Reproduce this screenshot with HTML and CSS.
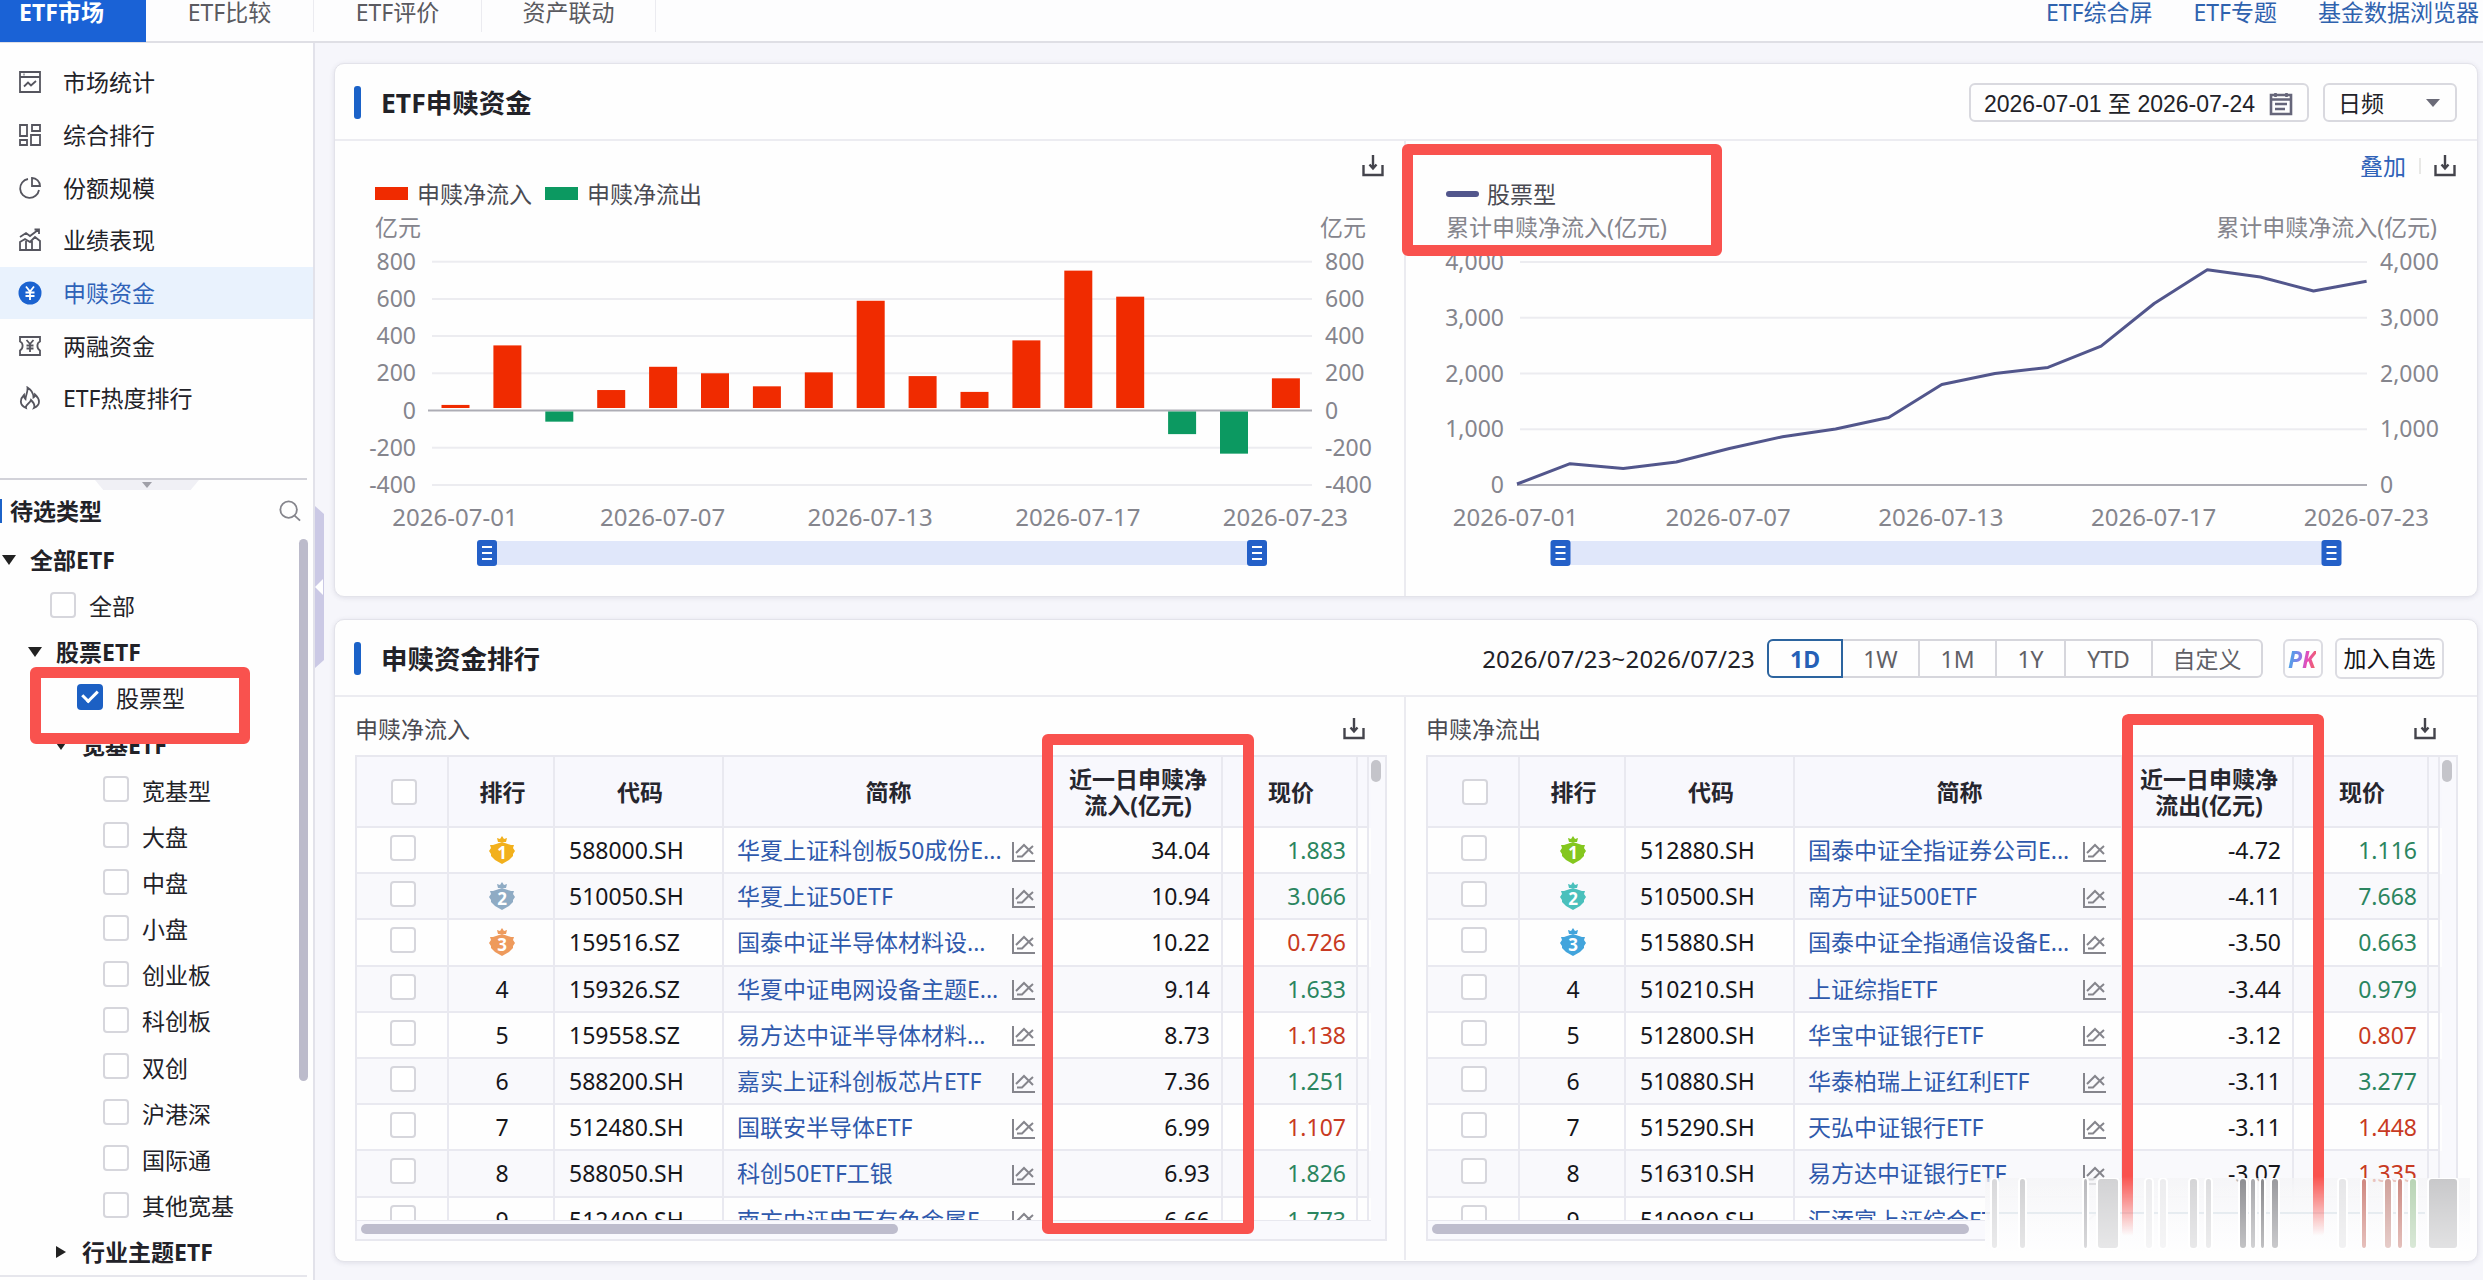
FILE: index.html
```html
<!DOCTYPE html>
<html lang="zh-CN">
<head>
    <meta charset="UTF-8">
    <meta name="viewport" content="width=device-width, initial-scale=1.0">
    <title>ETF申赎资金</title>
    <link rel="stylesheet" href="styles.css">
</head>
<body>
    <svg class="sprite">
        <symbol id="i-stat" viewBox="0 0 24 24"><path d="M2 2h20v20H2zM2 7h20M5.500 4.500h1M6 16.500l4-4 3 3 5-4.500"/></symbol>
        <symbol id="i-grid" viewBox="0 0 24 24"><path d="M2 2h7v11H2zM14 2h8v6h-8zM2 17h7v5H2zM13 12h9v10h-9z"/></symbol>
        <symbol id="i-pie" viewBox="0 0 24 24"><path d="M10 3a9.500 9.500 0 1 0 11 11M14 2v8h8a8 8 0 0 0-8-8z"/></symbol>
        <symbol id="i-perf" viewBox="0 0 24 24"><path d="M2 22V14l5-3 5 3 5-5 5 4v9zM8 22v-9M14 22v-9M2 9l6-4 4 3 8-6M16.500 1.500H21V6"/></symbol>
        <symbol id="i-yuan" viewBox="0 0 24 24"><circle cx="12" cy="12" r="11.500" fill="#1b63d0" stroke="none"/><path stroke="#fff" d="M8 5.500l4 5 4-5M12 10.500V19M7.500 11.500h9M7.500 15h9"/></symbol>
        <symbol id="i-ticket" viewBox="0 0 24 24"><path d="M2 3h20v4.500c-3.500 1.500-3.500 7 0 9V21H2v-4.500c3.500-2 3.500-7.500 0-9zM8.500 6l3.500 4 3.500-4M12 10v8M8.500 11.500h7M8.500 14.500h7"/></symbol>
        <symbol id="i-fire" viewBox="0 0 24 24"><path d="M8 22C1 19 2 13 6 9c0 2 .5 3 1.500 4C8 8 10 6 9.500 1.500c4 2.500 6 6 6 10 1-.5 1.500-1.500 1.500-3C22 13 23 19 16 22c1.500-3 0-5-3-8-1 4-6 4-5 8z"/></symbol>
        <symbol id="i-down" viewBox="0 0 22 22"><path d="M1.500 10v10h19V10M11 0v13M7.500 9.500l3.500 4 3.500-4"/></symbol>
        <symbol id="i-cal" viewBox="0 0 24 24"><path d="M2 3h20v19H2zM2 7.500h20M6.500 1v4M17.500 1v4M6 12h12M6 17h10"/></symbol>
        <symbol id="i-line" viewBox="0 0 24 22"><path d="M2 1v19h22M5 12l8-8 9 9M6 15.500h5l6-6 5-4.500"/></symbol>
        <symbol id="i-search" viewBox="0 0 24 24"><circle cx="10.500" cy="10.500" r="9"/><path d="M17 17l6 5.500"/></symbol>
    </svg>

    <header class="topbar">
        <nav class="tabs">
            <a class="tab active">ETF市场</a>
            <a class="tab">ETF比较</a>
            <a class="tab">ETF评价</a>
            <a class="tab">资产联动</a>
        </nav>
        <nav class="links">
            <a>ETF综合屏</a>
            <a>ETF专题</a>
            <a>基金数据浏览器</a>
        </nav>
    </header>

    <div class="layout">
        <aside class="sidebar">
            <ul class="menu">
                <li><svg><use href="#i-stat"/></svg>市场统计</li>
                <li><svg><use href="#i-grid"/></svg>综合排行</li>
                <li><svg><use href="#i-pie"/></svg>份额规模</li>
                <li><svg><use href="#i-perf"/></svg>业绩表现</li>
                <li class="active"><svg><use href="#i-yuan"/></svg>申赎资金</li>
                <li><svg><use href="#i-ticket"/></svg>两融资金</li>
                <li><svg><use href="#i-fire"/></svg>ETF热度排行</li>
            </ul>
            <div class="types">
                <span class="fold"></span>
                <div class="types-head">
                    <b>待选类型</b>
                    <svg><use href="#i-search"/></svg>
                </div>
                <ul class="tree">
                    <li class="group l0"><i class="caret"></i>全部ETF</li>
                    <li class="leaf l1"><i class="check"></i>全部</li>
                    <li class="group l1"><i class="caret"></i>股票ETF</li>
                    <li class="leaf l2"><i class="check on"></i>股票型</li>
                    <li class="group l2"><i class="caret"></i>宽基ETF</li>
                    <li class="leaf l3"><i class="check"></i>宽基型</li>
                    <li class="leaf l3"><i class="check"></i>大盘</li>
                    <li class="leaf l3"><i class="check"></i>中盘</li>
                    <li class="leaf l3"><i class="check"></i>小盘</li>
                    <li class="leaf l3"><i class="check"></i>创业板</li>
                    <li class="leaf l3"><i class="check"></i>科创板</li>
                    <li class="leaf l3"><i class="check"></i>双创</li>
                    <li class="leaf l3"><i class="check"></i>沪港深</li>
                    <li class="leaf l3"><i class="check"></i>国际通</li>
                    <li class="leaf l3"><i class="check"></i>其他宽基</li>
                    <li class="group l2 closed"><i class="caret"></i>行业主题ETF</li>
                </ul>
                <span class="tree-scroll"></span>
            </div>
            <span class="splitter"></span>
        </aside>

        <main class="content">
            <section class="panel panel-chart">
                <div class="panel-head">
                    <h2>ETF申赎资金</h2>
                    <div class="tools">
                        <span class="date-range">2026-07-01 至 2026-07-24<svg><use href="#i-cal"/></svg></span>
                        <span class="select">日频<i class="caret"></i></span>
                    </div>
                </div>
                <div class="halves">
                    <div class="half">
                        <div class="chart-tools"><svg><use href="#i-down"/></svg></div>
                        <svg class="chart" id="barChart" width="1070" height="416" viewBox="335 181 1070 416"></svg>
                    </div>
                    <div class="half">
                        <div class="chart-tools"><a>叠加</a><i></i><svg><use href="#i-down"/></svg></div>
                        <svg class="chart" id="lineChart" width="1070" height="416" viewBox="1406 181 1070 416"></svg>
                    </div>
                </div>
            </section>

            <section class="panel panel-rank">
                <div class="panel-head">
                    <h2>申赎资金排行</h2>
                    <div class="tools">
                        <span class="period">2026/07/23~2026/07/23</span>
                        <div class="range">
                            <span class="on">1D</span><span>1W</span><span>1M</span><span>1Y</span><span>YTD</span><span>自定义</span>
                        </div>
                        <span class="pk"><em>PK</em></span>
                        <span class="add">加入自选</span>
                    </div>
                </div>
                <div class="halves">
                    <div class="half">
                        <div class="rank-title">申赎净流入<svg><use href="#i-down"/></svg></div>
                        <div class="table" id="inTable"></div>
                    </div>
                    <div class="half">
                        <div class="rank-title">申赎净流出<svg><use href="#i-down"/></svg></div>
                        <div class="table" id="outTable"></div>
                    </div>
                </div>
            </section>
        </main>
    </div>

    <div class="smear" id="smear"></div>
    <div class="mark mark-type"></div>
    <div class="mark mark-legend"></div>
    <div class="mark mark-in"></div>
    <div class="mark mark-out"></div>

    <script src="script.js"></script>
</body>
</html>
```
FILE: styles.css
```css
* {
    box-sizing: border-box;
}
body {
    margin: 0;
    width: 2483px;
    height: 1280px;
    overflow: hidden;
    position: relative;
    background: #f6f6fb;
    font-family: "Noto Sans", "Noto Sans CJK SC", sans-serif;
    font-size: 23px;
    line-height: 30px;
    color: #222228;
}
ul {
    margin: 0;
    padding: 0;
    list-style: none;
}
svg {
    fill: none;
    stroke: #55555e;
    stroke-width: 1.8;
    flex: none;
}
.sprite {
    display: none;
}

/* top bar */
.topbar {
    display: flex;
    justify-content: space-between;
    height: 43px;
    background: #fdfdfe;
    border-bottom: 2px solid #dfdfe5;
}
.tabs, .links {
    display: flex;
}
.tab {
    width: 168px;
    height: 32px;
    line-height: 25px;
    text-align: center;
    color: #5a5a60;
    border-right: 1px solid #ebebf0;
}
.tab:last-child {
    width: 174px;
}
.tab.active {
    width: 146px;
    height: 42px;
    padding-right: 23px;
    background: #1a62d6;
    color: #fff;
    font-weight: bold;
    border: none;
}
.links {
    gap: 41px;
    padding-right: 4px;
    line-height: 25px;
    color: #2f62ae;
}

/* sidebar */
.layout {
    display: flex;
    height: 1237px;
}
.sidebar {
    position: relative;
    width: 316px;
    background: #fefefe;
    border-right: 2px solid #e2e2ea;
}
.menu {
    height: 435px;
    padding-top: 13px;
}
.menu li {
    display: flex;
    align-items: center;
    gap: 21px;
    height: 52.700px;
    padding-left: 18px;
}
.menu svg {
    width: 24px;
    height: 24px;
}
.menu .active {
    background: #e9f2fd;
    color: #2f62b8;
}
.types {
    position: relative;
    width: 307px;
    border-top: 2px solid #d2d2d9;
}
.fold {
    position: absolute;
    left: 95px;
    top: 0;
    width: 104px;
    height: 10px;
    background: #f0f0f5;
    clip-path: polygon(0 0, 100% 0, 92% 100%, 8% 100%);
}
.fold::after {
    content: "";
    position: absolute;
    left: 47px;
    top: 2px;
    border: 5px solid transparent;
    border-top: 6px solid #a0a0a8;
}
.types-head {
    display: flex;
    justify-content: space-between;
    align-items: center;
    height: 57px;
    padding: 4px 6px 0 0;
}
.types-head b {
    height: 24px;
    line-height: 24px;
    padding-left: 8px;
    border-left: 2px solid #1b62c8;
}
.types-head svg {
    width: 22px;
    height: 22px;
    stroke: #85858c;
    stroke-width: 2;
}
.tree {
    border-bottom: 2px solid #e6e6ec;
}
.tree li {
    display: flex;
    align-items: center;
    height: 46.150px;
}
.group {
    font-weight: bold;
}
.tree .caret {
    width: 14px;
    margin-right: 14px;
    border: 7px solid transparent;
    border-top: 10px solid #222;
    border-bottom: 0;
}
.tree .closed .caret {
    width: 9px;
    margin-left: 2px;
    margin-right: 16px;
    border: 6.500px solid transparent;
    border-left: 10px solid #222;
    border-right: 0;
}
.check {
    width: 26px;
    height: 26px;
    flex: none;
    background: #fff;
    border: 2px solid #d6d6dc;
    border-radius: 4px;
}
.tree .check {
    margin: -3px 13px 0 0;
}
.check.on {
    background: #1c60c4;
    border-color: #1c60c4;
}
.check.on::after {
    content: "";
    display: block;
    width: 7px;
    height: 12px;
    margin: 1px auto 0;
    border: solid #fff;
    border-width: 0 3px 3px 0;
    transform: rotate(45deg);
}
.group.l0 { padding-left: 2px; }
.group.l1 { padding-left: 28px; }
.group.l2 { padding-left: 54px; }
.leaf.l1 { padding-left: 50px; }
.leaf.l2 { padding-left: 77px; }
.leaf.l3 { padding-left: 103px; }
.tree-scroll {
    position: absolute;
    right: -1px;
    top: 59px;
    width: 9px;
    height: 542px;
    border-radius: 5px;
    background: #bcbbcb;
}
.splitter {
    position: absolute;
    left: 315px;
    top: 463px;
    width: 9px;
    height: 162px;
    background: #cbc9e5;
    clip-path: polygon(0 0, 100% 5%, 100% 95%, 0 100%);
}
.splitter::after {
    content: "";
    position: absolute;
    left: 0;
    top: 73px;
    border: 8px solid transparent;
    border-right: 8px solid #fff;
    border-left: 0;
}

/* panels */
.content {
    flex: 1;
    padding: 20px 5px 0 19px;
}
.panel {
    background: #fefefe;
    border: 1px solid #e3e3ea;
    border-radius: 10px;
    box-shadow: 0 1px 5px rgba(60, 60, 90, 0.12);
}
.panel-chart {
    height: 534px;
    margin-bottom: 22px;
}
.panel-rank {
    height: 643px;
}
.panel-head {
    display: flex;
    justify-content: space-between;
    align-items: center;
    height: 77px;
    padding: 2px 20px 0 19px;
    border-bottom: 2px solid #ececf1;
}
h2 {
    display: flex;
    align-items: center;
    gap: 20px;
    margin: 0;
    font-size: 26.500px;
}
h2::before {
    content: "";
    width: 7px;
    height: 33px;
    border-radius: 3px;
    background: #1b62c8;
}
.tools {
    display: flex;
    align-items: center;
}
.date-range, .select {
    display: flex;
    align-items: center;
    height: 39px;
    border: 2px solid #d9d9df;
    border-radius: 6px;
}
.date-range {
    width: 340px;
    margin-right: 14px;
    padding: 2px 0 0 13px;
    font-family: "Liberation Sans", "Noto Sans CJK SC", sans-serif;
}
.date-range svg {
    width: 24px;
    height: 24px;
    margin-left: 14px;
    stroke: #66667a;
    stroke-width: 2.600;
}
.select {
    width: 134px;
    justify-content: space-between;
    padding: 0 15px 0 13px;
}
.select .caret {
    border: 7px solid transparent;
    border-top: 8px solid #6b6b78;
    border-bottom: 0;
}
.halves {
    display: flex;
}
.half {
    width: 50%;
}
.half:first-child {
    border-right: 2px solid #ebebf0;
}
.panel-chart .half {
    height: 455px;
}
.panel-rank .half {
    height: 563px;
}

/* charts */
.chart-tools {
    display: flex;
    justify-content: flex-end;
    align-items: center;
    height: 40px;
    padding: 10px 21px 0 0;
    color: #2f62b8;
}
.half:first-child .chart-tools {
    padding-right: 20px;
}
.chart-tools i {
    width: 2px;
    height: 16px;
    margin: 0 13px;
    background: #e8e8e6;
}
.chart-tools svg, .rank-title svg {
    width: 22px;
    height: 22px;
    stroke: #44444c;
    stroke-width: 2.400;
}
.chart {
    display: block;
}
.chart text {
    fill: #85858d;
    stroke: none;
    font-size: 23px;
}
.chart .day {
    font-size: 24px;
    text-anchor: middle;
}
.chart .end {
    text-anchor: end;
}
.chart .name {
    fill: #4a4a52;
}
.chart .grid {
    stroke: #ececf0;
    stroke-width: 2;
}
.chart .axis {
    stroke: #adadb5;
    stroke-width: 2;
}
.chart .inflow {
    fill: #f02b00;
    stroke: none;
}
.chart .outflow {
    fill: #0c9961;
    stroke: none;
}
.chart .track {
    fill: #e0e7fa;
    stroke: none;
}
.chart .handle {
    fill: #2460c8;
    stroke: none;
}
.chart .grip {
    stroke: #fff;
    stroke-width: 2;
}
.chart .total {
    stroke: #52568c;
    stroke-width: 3;
    stroke-linejoin: round;
}
.chart .dash {
    stroke: #52568c;
    stroke-width: 6;
    stroke-linecap: round;
}

/* rank toolbar */
.period {
    margin-right: 12px;
    font-size: 24px;
    letter-spacing: 0.18px;
}
.panel-rank .tools {
    padding-right: 13px;
}
.range {
    display: flex;
    margin-right: 20px;
    border: 2px solid #d6d6dc;
    border-left: none;
    border-radius: 6px;
    height: 39px;
}
.range span {
    width: 77px;
    line-height: 36px;
    text-align: center;
    color: #606066;
    border-right: 2px solid #d6d6dc;
}
.range .on {
    width: 76px;
    margin: -2px 0;
    border: 2px solid #2c649f;
    border-radius: 6px 0 0 6px;
    color: #2560b6;
    font-weight: bold;
}
.range span:nth-child(4) { width: 69px; }
.range span:nth-child(5) { width: 87px; }
.range span:nth-child(6) { width: 108px; border: none; }
.pk, .add {
    height: 39px;
    line-height: 36px;
    text-align: center;
    border: 2px solid #dcdce2;
    border-radius: 6px;
}
.pk {
    width: 40px;
    margin-right: 12px;
}
.pk em {
    margin-left: -2px;
    font-weight: bold;
    font-size: 23px;
    background: linear-gradient(100deg, #36b4e8, #8a7ae8 45%, #e84ab8 65%, #f06a50);
    -webkit-background-clip: text;
    background-clip: text;
    color: transparent;
}
.add {
    width: 109px;
    height: 41px;
    color: #16161a;
}

/* rank tables */
.rank-title {
    display: flex;
    justify-content: space-between;
    align-items: center;
    height: 58px;
    padding: 5px 39px 0 20px;
    color: #4a4a52;
}
.half:last-child .rank-title {
    padding-right: 41px;
}
.table {
    position: relative;
    width: 1032px;
    height: 486px;
    margin-left: 20px;
    background: #f9f9fd;
    border: 2px solid #e8e8ef;
}
.rows {
    width: 1014px;
    height: 464px;
    overflow: hidden;
    border-bottom: 1px solid #e8e8ef;
}
.row {
    display: grid;
    grid-template-columns: 92px 106px 169px 328px 171px 135px 11px;
    height: 46.200px;
    background: #fefefe;
}
.row > span {
    display: flex;
    align-items: center;
    border-right: 2px solid #e9e9f0;
    border-bottom: 2px solid #e9e9f0;
    white-space: nowrap;
    color: #16161a;
}
.row:nth-child(odd) {
    background: #f9f9fc;
}
.row .pick {
    justify-content: center;
    padding: 0 0 4px 2px;
}
.row .rank {
    justify-content: center;
    padding-left: 2px;
}
.row .code {
    padding-left: 14px;
}
.row .fund {
    justify-content: space-between;
    padding: 0 15px 0 13px;
    color: #2f59ac;
}
.fund svg {
    width: 24px;
    height: 22px;
    margin-top: 3px;
    stroke: #85858c;
    stroke-width: 2;
}
.row .net {
    justify-content: flex-end;
    padding-right: 11px;
}
.row .price {
    justify-content: flex-end;
    padding-right: 10px;
}
.row .up {
    color: #c83a22;
}
.row .fall {
    color: #2b8560;
}
.rows .row.head {
    height: 71px;
    background: #f8f8fd;
}
.row.head > span {
    justify-content: center;
    padding: 0 0 0 3px;
    text-align: center;
    font-weight: bold;
    line-height: 26px;
    color: #26262e;
}
.medal {
    width: 28px;
    height: 28px;
    stroke: none;
}
.medal text {
    font-size: 17px;
    font-weight: bold;
    fill: #fff;
    text-anchor: middle;
}
.vbar {
    position: absolute;
    right: 4px;
    top: 3px;
    width: 10px;
    height: 22px;
    border-radius: 5px;
    background: #c4c4ca;
}
.hbar {
    position: absolute;
    left: 4px;
    bottom: 5px;
    width: 537px;
    height: 10px;
    border-radius: 5px;
    background: #bebdcd;
}

/* highlight frames over the page */
.mark {
    position: absolute;
    border: 11px solid #f9524e;
    border-radius: 6px;
}
.mark-type {
    left: 30px;
    top: 667px;
    width: 220px;
    height: 77px;
}
.mark-legend {
    left: 1402px;
    top: 144px;
    width: 320px;
    height: 112px;
}
.mark-in {
    left: 1042px;
    top: 734px;
    width: 212px;
    height: 500px;
}
.mark-out {
    left: 2122px;
    top: 714px;
    width: 202px;
    height: 524px;
    border-bottom: none;
    -webkit-mask: linear-gradient(#000 462px, transparent 522px);
    mask: linear-gradient(#000 462px, transparent 522px);
}

/* blurred corner stamp */
.smear {
    position: absolute;
    left: 1985px;
    top: 1178px;
    width: 485px;
    height: 74px;
    background: linear-gradient(rgba(244, 244, 246, 0.7), rgba(247, 247, 249, 0.96) 30%, rgba(253, 253, 254, 0.98));
}
.smear svg {
    display: block;
    stroke: none;
}
.smear .pill {
    stroke: #fff;
    stroke-width: 2;
}
```
FILE: script.js
```js
const days = ['2026-07-01', '2026-07-07', '2026-07-13', '2026-07-17', '2026-07-23'];

function line(cls, x1, y1, x2, y2) {
    return `<line class="${cls}" x1="${x1}" y1="${y1}" x2="${x2}" y2="${y2}"/>`;
}
function text(cls, x, y, s) {
    return `<text class="${cls}" x="${x}" y="${y + 8}">${s}</text>`;
}
function slider(x1, x2) {
    let s = `<rect class="track" x="${x1}" y="541" width="${x2 - x1}" height="24"/>`;
    [x1, x2].forEach(x => {
        s += `<rect class="handle" x="${x - 10}" y="540" width="20" height="26" rx="3"/>`;
        [547, 553, 559].forEach(y => s += line('grip', x - 5, y, x + 5, y));
    });
    return s;
}

// daily net flow, 亿元
function drawBars() {
    const flow = [30, 350, -60, 110, 235, 200, 130, 205, 590, 185, 100, 377, 752, 612, -127, -232, 173];
    const y = v => 410.5 - v * 0.186;
    let s = '<rect class="inflow" x="375" y="187" width="33" height="13"/>' + text('name', 417, 195, '申赎净流入')
        + '<rect class="outflow" x="545" y="187" width="33" height="13"/>' + text('name', 587, 195, '申赎净流出')
        + text('', 375, 228, '亿元') + text('', 1320, 228, '亿元');
    for (let v = 800; v >= -400; v -= 200) {
        s += line(v ? 'grid' : 'axis', v ? 432 : 428, y(v), 1312, y(v));
        s += text('end', 416, y(v), v) + text('', 1325, y(v), v);
    }
    flow.forEach((v, i) => {
        const x = 441.5 + i * 51.9;
        s += v > 0
            ? `<rect class="inflow" x="${x}" y="${y(v)}" width="28" height="${408 - y(v)}"/>`
            : `<rect class="outflow" x="${x}" y="411.5" width="28" height="${y(v) - 411.5}"/>`;
    });
    days.forEach((d, i) => s += text('day', 455 + i * 207.6, 518, d));
    document.getElementById('barChart').innerHTML = s + slider(487, 1257);
}

// running total, 亿元
function drawLine() {
    const total = [18, 382, 296, 412, 655, 866, 1004, 1210, 1802, 2000, 2109, 2492, 3255, 3860, 3731, 3480, 3654];
    const y = v => 485 - v * 0.05575;
    let s = line('dash', 1449, 194, 1476, 194) + text('name', 1487, 195, '股票型')
        + text('', 1446, 228, '累计申赎净流入(亿元)') + text('end', 2437, 228, '累计申赎净流入(亿元)');
    for (let v = 4000; v >= 0; v -= 1000) {
        s += line(v ? 'grid' : 'axis', v ? 1520 : 1517, y(v), 2367, y(v));
        s += text('end', 1504, y(v), v.toLocaleString('en-US')) + text('', 2380, y(v), v.toLocaleString('en-US'));
    }
    s += `<polyline class="total" points="${total.map((v, i) => (1517 + i * 53.1) + ',' + y(v)).join(' ')}"/>`;
    days.forEach((d, i) => s += text('day', 1515.5 + i * 212.7, 518, d));
    document.getElementById('lineChart').innerHTML = s + slider(1560.5, 2331.5);
}

function medal(n, color) {
    return `<svg class="medal" viewBox="0 0 28 28"><path fill="${color}" d="M14 0l2 3 3-1-1 4h-8l-1-4 3 1zM14 6l9 3h3l-1 3 2 3-2 3v2l-4 4-7 4-7-4-4-4v-2l-2-3 2-3-1-3h3z"/><text x="14" y="22.500">${n}</text></svg>`;
}

// code, name, net flow, price, 1 = red price
const inflow = [
    ['588000.SH', '华夏上证科创板50成份E...', '34.04', '1.883', 0],
    ['510050.SH', '华夏上证50ETF', '10.94', '3.066', 0],
    ['159516.SZ', '国泰中证半导体材料设...', '10.22', '0.726', 1],
    ['159326.SZ', '华夏中证电网设备主题E...', '9.14', '1.633', 0],
    ['159558.SZ', '易方达中证半导体材料...', '8.73', '1.138', 1],
    ['588200.SH', '嘉实上证科创板芯片ETF', '7.36', '1.251', 0],
    ['512480.SH', '国联安半导体ETF', '6.99', '1.107', 1],
    ['588050.SH', '科创50ETF工银', '6.93', '1.826', 0],
    ['512400.SH', '南方中证申万有色金属E...', '6.66', '1.773', 0]
];
const outflow = [
    ['512880.SH', '国泰中证全指证券公司E...', '-4.72', '1.116', 0],
    ['510500.SH', '南方中证500ETF', '-4.11', '7.668', 0],
    ['515880.SH', '国泰中证全指通信设备E...', '-3.50', '0.663', 0],
    ['510210.SH', '上证综指ETF', '-3.44', '0.979', 0],
    ['512800.SH', '华宝中证银行ETF', '-3.12', '0.807', 1],
    ['510880.SH', '华泰柏瑞上证红利ETF', '-3.11', '3.277', 0],
    ['515290.SH', '天弘中证银行ETF', '-3.11', '1.448', 1],
    ['516310.SH', '易方达中证银行ETF', '-3.07', '1.335', 1],
    ['510980.SH', '汇添富上证综合ETF', '', '', 0]
];

function drawTable(id, title, list, colors) {
    let s = `<div class="rows"><div class="row head"><span class="pick"><i class="check"></i></span><span>排行</span><span>代码</span><span>简称</span><span>近一日申赎净<br>${title}(亿元)</span><span>现价</span><span></span></div>`;
    list.forEach((r, i) => {
        s += `<div class="row"><span class="pick"><i class="check"></i></span>
            <span class="rank">${i < 3 ? medal(i + 1, colors[i]) : i + 1}</span>
            <span class="code">${r[0]}</span>
            <span class="fund">${r[1]}<svg><use href="#i-line"/></svg></span>
            <span class="net">${r[2]}</span>
            <span class="price ${r[4] ? 'up' : 'fall'}">${r[3]}</span><span></span></div>`;
    });
    document.getElementById(id).innerHTML = s + '</div><i class="vbar"></i><i class="hbar"></i>';
}

// vertical streaks: x, width, color
function drawSmear() {
    const streaks = [[6, 7, '#d8d8da'], [34, 7, '#d0d0d2'], [98, 5, '#b8b8bc'], [112, 22, '#d2d2d4'],
        [160, 8, '#ececee'], [174, 8, '#ececee'], [204, 9, '#d4d4d6'], [220, 7, '#dcdcde'], [254, 8, '#8e8e92'], [265, 6, '#a8a8ac'],
        [275, 5, '#88888c'], [286, 8, '#9a9a9e'], [353, 9, '#e6e6e8'], [376, 6, '#d08880'], [399, 8, '#d0a09a'], [412, 6, '#cc8880'], [424, 8, '#b8d4b4'], [443, 30, '#c8c8ca']];
    let s = '<svg width="485" height="74"><defs><linearGradient id="fade" x2="0" y2="1"><stop offset="0" stop-color="#fff" stop-opacity="0"/><stop offset="1" stop-color="#fff" stop-opacity=".5"/></linearGradient></defs>'
        + '<rect x="0" y="34" width="440" height="2" fill="#dfe6ec"/>';
    streaks.forEach(b => s += `<rect class="pill" x="${b[0]}" y="0" width="${b[1]}" height="71" rx="4" fill="${b[2]}"/>`);
    document.getElementById('smear').innerHTML = s + '<rect width="485" height="74" fill="url(#fade)"/></svg>';
}

drawBars();
drawLine();
drawTable('inTable', '流入', inflow, ['#f2b01c', '#8fabc4', '#ee9a5c']);
drawTable('outTable', '流出', outflow, ['#84c71e', '#4ac0bc', '#42a4dc']);
drawSmear();
```
